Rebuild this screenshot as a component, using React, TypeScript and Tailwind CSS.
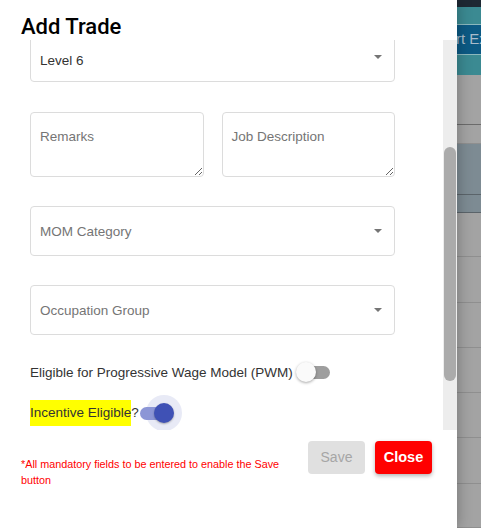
import React from 'react';

type SwitchProps = { on: boolean };

const Toggle = ({ on }: SwitchProps) => {
    if (on) {
        return (
            <span className="relative inline-flex h-[36px] w-[42px] items-center">
                {/* halo sits under the track */}
                <span className="absolute left-[6px] top-0 h-[36px] w-[36px] rounded-full bg-[#e8eaf6]" />
                <span className="relative h-[13px] w-[30px] rounded-full bg-[#8c96d6]" />
                <span className="absolute left-[14px] top-[8px] h-[20px] w-[20px] rounded-full bg-[#3f51b5] shadow-[0_1px_2px_rgba(0,0,0,0.3)]" />
            </span>
        );
    }
    return (
        <span className="relative inline-flex h-[22px] w-[36px] items-center">
            <span className="ml-[4px] h-[13px] w-[30px] rounded-full bg-[#9e9e9e]" />
            <span className="absolute left-[0px] top-[1px] h-[20px] w-[20px] rounded-full bg-[#fafafa] shadow-[0_1px_3px_rgba(0,0,0,0.35)]" />
        </span>
    );
};

const Arrow = () => (
    <span className="h-0 w-0 border-x-[4px] border-t-[4px] border-x-transparent border-t-[#757575]" />
);

const SelectBox = ({ label, value }: { label: string; value?: string }) => (
    <div className="flex h-[50px] items-center justify-between rounded-[4px] border border-[#dcdcdc] pl-[9px] pr-[12px]">
        <span className={value ? 'pt-[8px] text-[#333]' : 'pt-[2px] text-[#757575]'}>{value ?? label}</span>
        <Arrow />
    </div>
);

const rows = [52, 19, 53, 19, 46, 47, 47, 47, 47, 47, 46];

export default function App() {
    return (
        <div className="flex h-[528px] w-[481px] overflow-hidden bg-white font-['Liberation_Sans',Arial,sans-serif] text-[13.5px]">
            {/* drawer */}
            <div className="relative z-10 flex w-[457px] shrink-0 flex-col bg-white shadow-[0_0_14px_rgba(0,0,0,0.3)]">
                <h2 className="h-[40px] pl-[21px] pt-[13px] font-['Roboto',sans-serif] text-[22px] font-medium leading-[28px] text-black">
                    Add Trade
                </h2>

                <div className="flex h-[390px]">
                    <div className="flex-1 overflow-hidden">
                        <div className="-mt-[8px] pl-[30px] pr-[48px]">
                            <SelectBox label="Level" value="Level 6" />

                            <div className="mt-[30px] grid grid-cols-2 gap-[18px]">
                                <textarea
                                    placeholder="Remarks"
                                    className="h-[65px] rounded-[4px] border border-[#dcdcdc] px-[9px] pt-[14px] outline-none placeholder:text-[#757575]"
                                />
                                <textarea
                                    placeholder="Job Description"
                                    className="h-[65px] rounded-[4px] border border-[#dcdcdc] px-[9px] pt-[14px] outline-none placeholder:text-[#757575]"
                                />
                            </div>

                            <div className="mt-[29px]">
                                <SelectBox label="MOM Category" />
                            </div>
                            <div className="mt-[29px]">
                                <SelectBox label="Occupation Group" />
                            </div>

                            <div className="mt-[26px] flex h-[24px] items-center text-[#333]">
                                <span>Eligible for Progressive Wage Model (PWM)</span>
                                <span className="ml-[3px]"><Toggle on={false} /></span>
                            </div>

                            <div className="mt-[10px] flex h-[36px] items-center text-[#333]">
                                <span className="bg-[#ffff00] py-[3px]">Incentive Eligible</span>
                                <span>?</span>
                                <span className="ml-[1px]"><Toggle on /></span>
                            </div>
                        </div>
                    </div>

                    {/* scrollbar */}
                    <div className="w-[14px] bg-[#ededed] pt-[107px]">
                        <div className="mx-auto h-[234px] w-[12px] rounded-full bg-[#ababab]" />
                    </div>
                </div>

                <div className="flex items-start justify-between pl-[21px] pr-[25px] pt-[11px]">
                    <p className="mt-[15px] w-[270px] text-[10.8px] leading-[16px] text-[#ff0000]">
                        *All mandatory fields to be entered to enable the Save button
                    </p>
                    <div className="flex gap-[10px]">
                        <button className="h-[33px] w-[57px] rounded-[4px] bg-[#e0e0e0] text-[14px] text-[#a6a6a6]">Save</button>
                        <button className="h-[33px] w-[57px] rounded-[4px] bg-[#ff0000] text-[14.5px] font-semibold text-white shadow-[0_2px_4px_rgba(0,0,0,0.3)]">
                            Close
                        </button>
                    </div>
                </div>
            </div>

            {/* page behind the backdrop */}
            <div className="flex min-w-0 flex-1 flex-col">
                <div className="h-[7px] bg-[#1e2833]" />
                <div className="h-[18px] bg-[#3b8a92]" />
                <div className="h-[1px] bg-[#8bb8bd]" />
                <div className="flex h-[30px] items-center overflow-hidden whitespace-nowrap bg-[#0c5a84] text-[15px] text-[#a9bccb]">
                    <span className="-ml-[1px]">rt Ex</span>
                </div>
                <div className="h-[1px] bg-[#8bb8bd]" />
                <div className="h-[21px] bg-[#3b8a92]" />
                {rows.map((h, i) => (
                    <div
                        key={i}
                        style={{ height: h }}
                        className={
                            i === 2 || i === 3
                                ? 'border-b border-[#5b646a] bg-[#7d8b93]'
                                : i === 0
                                  ? 'border-b border-[#6b6b6b] bg-[#a3a3a3]'
                                  : 'border-b border-[#8f8f8f] bg-[#a3a3a3]'
                        }
                    />
                ))}
            </div>
        </div>
    );
}
